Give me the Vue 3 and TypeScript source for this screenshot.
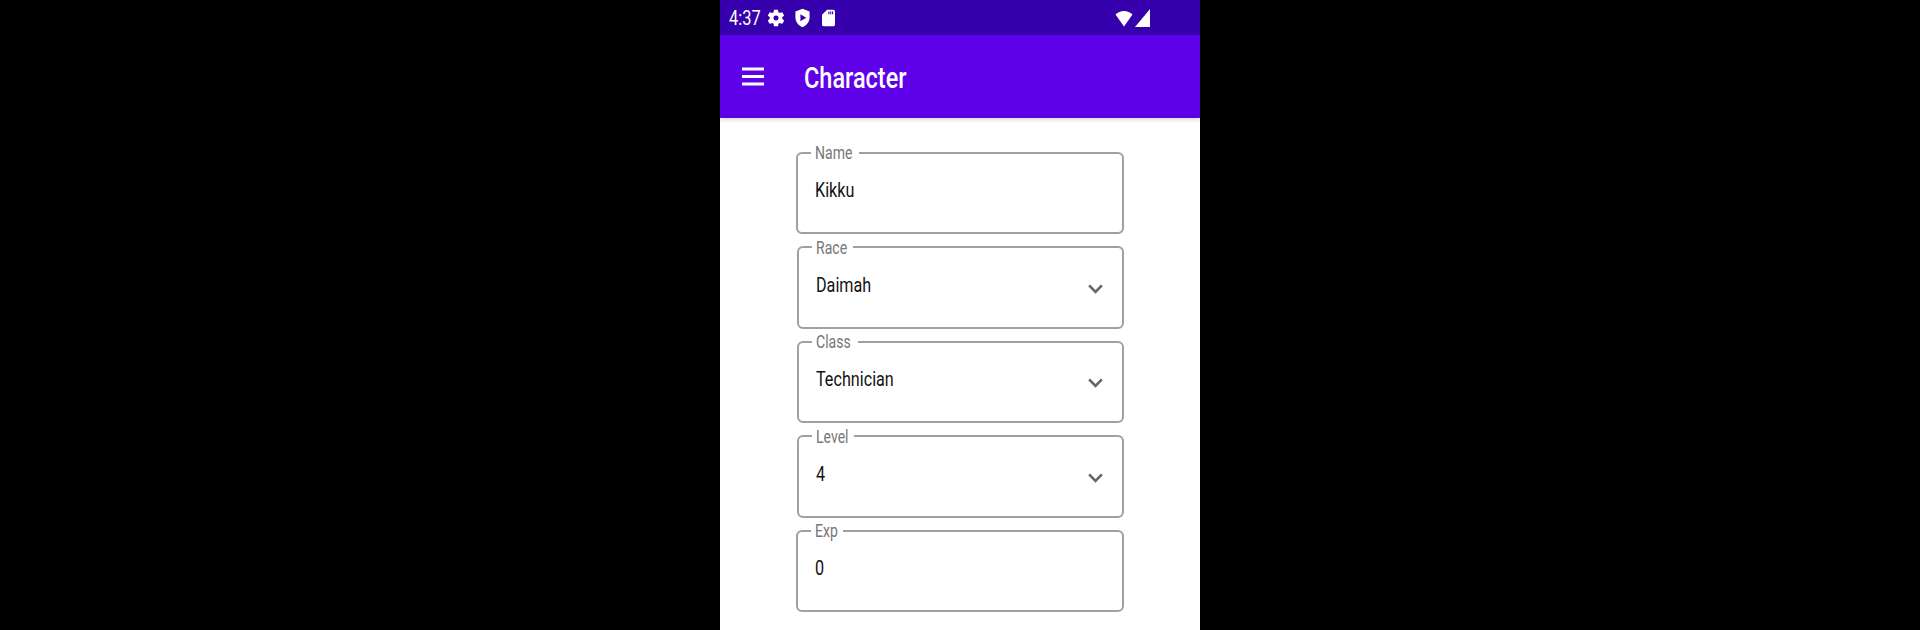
<template>
  <main class="stage">
    <section class="phone">
      <div class="status-bar">
        <span class="clock"><span class="squeeze">4:37</span></span>
        <svg class="st-icon gear" viewBox="0 0 24 24" width="20" height="20">
          <path fill="#fff" d="M19.400 13c.04-.33.06-.66.06-1s-.02-.67-.06-1l2.100-1.650c.2-.15.25-.42.13-.64l-2-3.460c-.12-.22-.38-.3-.6-.22l-2.500 1c-.52-.4-1.080-.73-1.700-.98l-.37-2.650A.5.5 0 0 0 14 2h-4a.5.5 0 0 0-.5.42l-.37 2.650c-.62.25-1.180.59-1.700.98l-2.500-1c-.22-.08-.48 0-.6.22l-2 3.460c-.13.22-.07.49.12.64L4.550 11c-.04.33-.07.67-.07 1s.03.67.07 1l-2.100 1.650c-.2.15-.25.42-.13.64l2 3.460c.12.22.38.3.6.22l2.500-1c.52.4 1.080.73 1.700.98l.37 2.650c.04.24.25.42.5.42h4c.25 0 .46-.18.5-.42l.37-2.650c.62-.25 1.180-.59 1.700-.98l2.500 1c.22.08.48 0 .6-.22l2-3.460c.12-.22.07-.49-.13-.64L19.400 13zM12 15a3 3 0 1 1 0-6 3 3 0 0 1 0 6z" />
        </svg>
        <svg class="st-icon shield" viewBox="0 0 18 22" width="15" height="20">
          <path fill="#fff" fill-rule="evenodd" d="M9 0 17.500 3.200V10c0 5.400-3.500 9.800-8.500 12C4 19.800.5 15.400.5 10V3.200L9 0zM6.500 6.500v8.500l7-4.250-7-4.250z" />
        </svg>
        <svg class="st-icon sd" viewBox="0 0 14 18" width="13" height="18">
          <path fill="#fff" fill-rule="evenodd" d="M5.500 0H12a2 2 0 0 1 2 2v14a2 2 0 0 1-2 2H2a2 2 0 0 1-2-2V5.500L5.500 0zM6.800 2v3h1.200V2H6.800zM8.800 2v3H10V2H8.800zM10.800 2v3H12V2h-1.200z" />
        </svg>
        <span class="spacer"></span>
        <svg class="st-icon wifi" viewBox="0 0 18 18" width="18" height="18">
          <path fill="#fff" d="M9 17.500 0.500 5.500C2.800 3.200 5.800 2 9 2s6.200 1.200 8.500 3.500L9 17.500z" />
        </svg>
        <svg class="st-icon signal" viewBox="0 0 15 18" width="15" height="18">
          <path fill="#fff" d="M15 0v18H0L15 0z" />
        </svg>
      </div>

      <header class="app-bar">
        <svg class="menu" viewBox="0 0 22 18" width="22" height="19">
          <path fill="#fff" d="M0 0h22v3H0zM0 7.500h22v3H0zM0 15h22v3H0z" />
        </svg>
        <h1 class="title"><span class="squeeze">Character</span></h1>
      </header>

      <form class="form">
        <fieldset
          v-for="field in fields"
          :key="field.label"
          class="field"
          :class="{ select: field.select }"
        >
          <legend class="legend" :style="{ width: field.notch + 'px' }"><span class="squeeze">{{ field.label }}</span></legend>
          <span class="value"><span class="squeeze">{{ field.value }}</span></span>
          <svg v-if="field.select" class="chevron" viewBox="0 0 16 10" width="15" height="10">
            <path fill="none" stroke="#666" stroke-width="2.800" d="M1.200 1.200 8 8l6.800-6.800" />
          </svg>
        </fieldset>
      </form>
    </section>
  </main>
</template>

<script setup lang="ts">
interface Field {
  label: string
  value: string
  notch: number
  select?: boolean
}

const fields: Field[] = [
  { label: 'Name', value: 'Kikku', notch: 48 },
  { label: 'Race', value: 'Daimah', notch: 41, select: true },
  { label: 'Class', value: 'Technician', notch: 46, select: true },
  { label: 'Level', value: '4', notch: 42, select: true },
  { label: 'Exp', value: '0', notch: 32 }
]
</script>

<style>
html,
body {
  margin: 0;
  background: #000;
}
</style>

<style scoped>
.stage {
  width: 1920px;
  height: 630px;
  background: #000;
  display: flex;
  justify-content: center;
  overflow: hidden;
  font-family: Roboto, "Liberation Sans", sans-serif;
}

.phone {
  width: 480px;
  height: 630px;
  background: #fff;
  display: flex;
  flex-direction: column;
}

.squeeze {
  display: inline-block;
  transform: scaleX(0.78);
  transform-origin: left center;
  white-space: nowrap;
}

.status-bar {
  height: 35px;
  flex: none;
  background: #3700ad;
  display: flex;
  align-items: center;
  padding: 1px 50px 0 9px;
  box-sizing: border-box;
  color: #fff;
}

.clock {
  width: 37px;
  font-size: 21px;
  line-height: 34px;
}

.st-icon {
  flex: none;
}

.gear {
  margin-right: 9px;
}

.shield {
  margin-right: 12px;
}

.spacer {
  flex: 1;
}

.signal {
  margin-left: 2px;
}

.app-bar {
  height: 83px;
  flex: none;
  background: #5e00e8;
  display: flex;
  align-items: center;
  padding-left: 22px;
  box-shadow: 0 2px 4px rgba(0, 0, 0, 0.15);
  position: relative;
}

.title {
  margin: 2px 0 0 40px;
  font-size: 29px;
  font-weight: 500;
  color: #fff;
  line-height: 36px;
  white-space: nowrap;
}

.title .squeeze {
  transform: scaleX(0.81);
}

.form {
  display: flex;
  flex-direction: column;
  gap: 3.500px;
  padding: 25px 0 0 76px;
}

.field {
  box-sizing: border-box;
  position: relative;
  width: 328px;
  height: 91px;
  margin: 0;
  padding: 0;
  border: 2px solid #a0a0a0;
  border-radius: 6px;
  min-inline-size: 0;
}

.field.select {
  width: 327px;
  margin-left: 1px;
}

.legend {
  box-sizing: border-box;
  font-size: 18px;
  line-height: 18px;
  color: #777;
  padding: 1px 0 0 4px;
  margin-left: 13px;
}

.value {
  display: block;
  margin: 14px 0 0 17px;
  font-size: 21px;
  line-height: 28px;
  color: #111;
}

.value .squeeze {
  transform: scaleX(0.77);
}

.chevron {
  position: absolute;
  right: 19px;
  top: 27px;
}
</style>
